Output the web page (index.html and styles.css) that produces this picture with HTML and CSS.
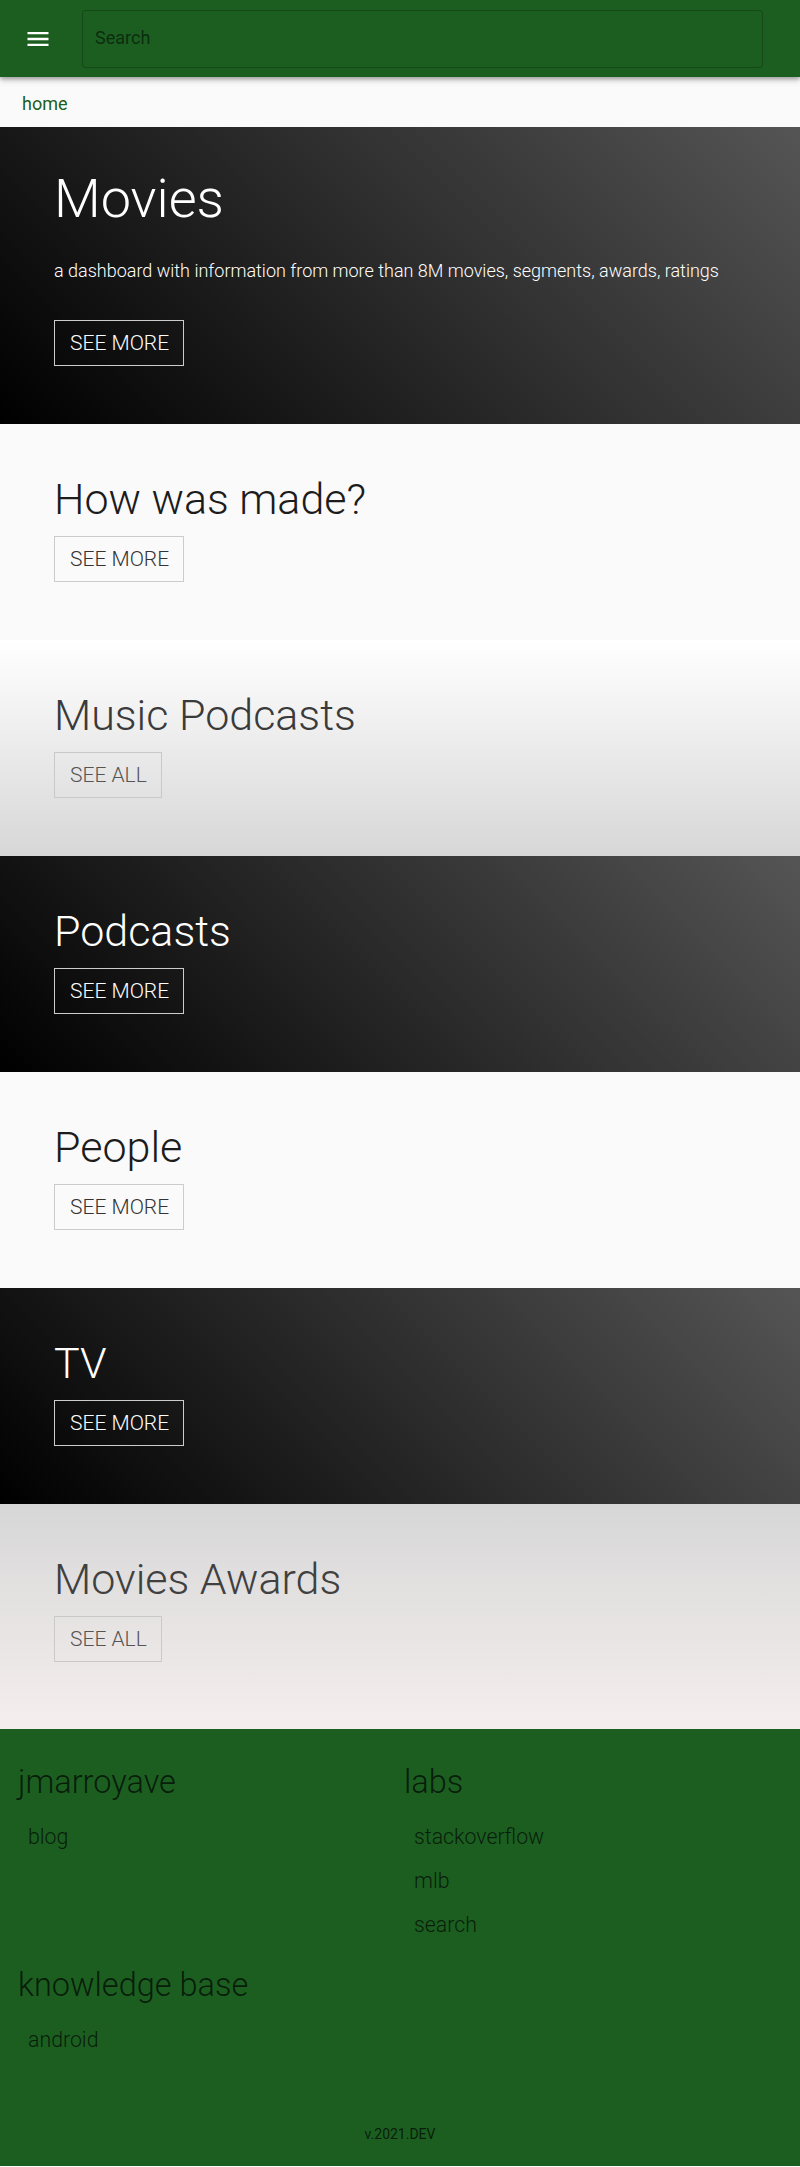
FILE: index.html
```html
<!DOCTYPE html>
<html lang="en">
<head>
<meta charset="utf-8">
<title>Movies dashboard</title>
<link rel="stylesheet" href="styles.css">
</head>
<body>
<header class="topbar">
  <button class="menu-btn" aria-label="menu">
    <svg class="menu-icon" viewBox="0 0 24 24" width="28" height="28"><path d="M3 18h18v-2H3v2zm0-5h18v-2H3v2zm0-7v2h18V6H3z" fill="#ffffff"/></svg>
  </button>
  <input class="search" type="text" placeholder="Search">
</header>
<nav class="crumbs"><a class="crumb" href="#">home</a></nav>
<main>
  <section class="tile tile-dark tile-hero">
    <h1 class="hero-title">Movies</h1>
    <p class="hero-sub">a dashboard with information from more than 8M movies, segments, awards, ratings</p>
    <a class="tile-btn" href="#">SEE MORE</a>
  </section>
  <section class="tile tile-light">
    <h2 class="tile-title">How was made?</h2>
    <a class="tile-btn" href="#">SEE MORE</a>
  </section>
  <section class="tile tile-fade-down">
    <h2 class="tile-title">Music Podcasts</h2>
    <a class="tile-btn" href="#">SEE ALL</a>
  </section>
  <section class="tile tile-dark">
    <h2 class="tile-title">Podcasts</h2>
    <a class="tile-btn" href="#">SEE MORE</a>
  </section>
  <section class="tile tile-light">
    <h2 class="tile-title">People</h2>
    <a class="tile-btn" href="#">SEE MORE</a>
  </section>
  <section class="tile tile-dark">
    <h2 class="tile-title">TV</h2>
    <a class="tile-btn" href="#">SEE MORE</a>
  </section>
  <section class="tile tile-fade-up tile-last">
    <h2 class="tile-title">Movies Awards</h2>
    <a class="tile-btn" href="#">SEE ALL</a>
  </section>
</main>
<footer class="footer">
  <div class="footer-grid">
    <div class="footer-col">
      <h3 class="footer-head">jmarroyave</h3>
      <a class="footer-link" href="#">blog</a>
    </div>
    <div class="footer-col">
      <h3 class="footer-head">labs</h3>
      <a class="footer-link" href="#">stackoverflow</a>
      <a class="footer-link" href="#">mlb</a>
      <a class="footer-link" href="#">search</a>
    </div>
    <div class="footer-col">
      <h3 class="footer-head">knowledge base</h3>
      <a class="footer-link" href="#">android</a>
    </div>
  </div>
  <div class="version">v.2021.DEV</div>
</footer>
</body>
</html>
```
FILE: styles.css
```css
* { box-sizing: border-box; }
html, body { margin: 0; padding: 0; }
body {
  font-family: Roboto, "Liberation Sans", Arial, sans-serif;
  background: #fafafa;
  color: #212121;
}

.topbar {
  position: relative;
  z-index: 2;
  height: 77px;
  background: #1b5e20;
  display: flex;
  align-items: center;
  gap: 30px;
  padding: 0 37px 0 24px;
  box-shadow: 0 2px 4px rgba(0,0,0,0.28), 0 4px 6px rgba(0,0,0,0.12);
}
.menu-btn {
  border: 0;
  background: transparent;
  padding: 0;
  width: 28px;
  height: 28px;
  display: flex;
}
.menu-icon { display: block; }
.search {
  flex: 1;
  height: 58px;
  border: 1px solid rgba(0,0,0,0.22);
  border-radius: 4px;
  background: #1b5e20;
  padding: 0 12px 2px;
  font-family: Roboto, "Liberation Sans", Arial, sans-serif;
  font-size: 18px;
  color: #fff;
  outline: none;
}
.search::placeholder { color: rgba(0,0,0,0.55); }

.crumbs {
  height: 50px;
  padding: 16px 22px 12px;
  background: #fafafa;
  line-height: 22px;
}
.crumb {
  font-size: 18px;
  color: #1b5e20;
  text-decoration: none;
}

.tile {
  display: flex;
  flex-direction: column;
  align-items: flex-start;
  padding: 49px 54px 58px;
}
.tile-dark {
  background: linear-gradient(45deg, #000000 0%, #555555 100%);
  color: #ffffff;
}
.tile-light {
  background: #fafafa;
  color: #1c1c1c;
}
.tile-fade-down {
  background: linear-gradient(to bottom, #ffffff 0%, #d7d7d7 100%);
  color: #3a3a3a;
}
.tile-fade-up {
  background: linear-gradient(to bottom, #d7d7d7 0%, #f5eeee 100%);
  color: #404040;
}
.tile-last { padding-bottom: 67px; }

.tile-hero { padding-top: 40px; }
.hero-title {
  margin: 0;
  font-size: 54px;
  font-weight: 300;
  line-height: 64px;
}
.hero-sub {
  margin: 26px 0 36px;
  font-size: 18px;
  font-weight: 300;
  line-height: 27px;
}
.tile-title {
  margin: 0 0 10px;
  font-size: 43px;
  font-weight: 300;
  line-height: 53px;
}
.tile-btn {
  display: inline-block;
  padding: 11px 14px 11px 15px;
  border: 1px solid #cccccc;
  font-size: 21px;
  font-weight: 300;
  line-height: 22px;
  color: inherit;
  text-decoration: none;
}
.tile-light .tile-btn { color: #333333; }
.tile-fade-down .tile-btn,
.tile-fade-up .tile-btn { color: #555555; border-color: #c9c9c9; }

.footer {
  background: #1b5e20;
  padding: 34px 18px 22px;
  color: rgba(0,0,0,0.7);
}
.footer-grid {
  display: grid;
  grid-template-columns: 1fr 1fr;
  column-gap: 8px;
  row-gap: 19px;
}
.footer-col {
  display: flex;
  flex-direction: column;
  align-items: flex-start;
}
.footer-head {
  margin: 0 0 13px;
  font-size: 32.5px;
  font-weight: 300;
  line-height: 39px;
}
.footer-link {
  padding-left: 10px;
  font-size: 21.3px;
  font-weight: 300;
  line-height: 44px;
  color: inherit;
  text-decoration: none;
}
.version {
  margin-top: 62px;
  text-align: center;
  font-size: 14px;
  line-height: 20px;
}
```
